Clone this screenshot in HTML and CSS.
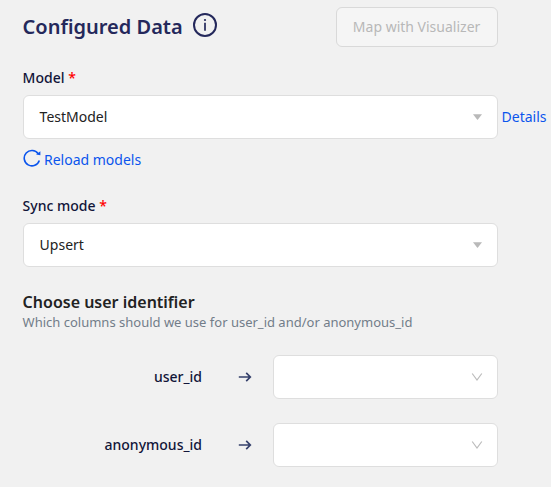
FILE: index.html
```html
<!DOCTYPE html>
<html lang="en">
<head>
<meta charset="utf-8">
<title>Configured Data</title>
<link rel="stylesheet" href="styles.css">
</head>
<body>
<main class="form">
  <header class="header">
    <h1 class="title">Configured Data</h1>
    <svg class="info" viewBox="0 0 24 24" fill="none" stroke="currentColor"><circle cx="12" cy="12" r="11" stroke-width="2"/><path d="M12 9.7v8" stroke-width="1.7"/><circle cx="12" cy="7" r="1.1" fill="currentColor" stroke="none"/></svg>
    <button class="button" disabled>Map with Visualizer</button>
  </header>

  <label class="label">Model <span class="required">*</span></label>
  <div class="field">
    <div class="select">TestModel<svg class="caret" viewBox="0 0 9 6"><path d="M0 .2h9L4.5 6z" fill="currentColor"/></svg></div>
    <a class="link">Details</a>
  </div>
  <a class="link reload">
    <svg class="reload-icon" viewBox="0 0 18 18" fill="none" stroke="currentColor" stroke-width="1.6"><path d="M16.3 11.4A7.7 7.7 0 1 1 15.2 4.7"/><path d="M17.4 2.2v4.1l-4.3-.7z" fill="currentColor" stroke="none"/></svg>
    <span>Reload models</span>
  </a>

  <label class="label label-sync">Sync mode <span class="required">*</span></label>
  <div class="field">
    <div class="select">Upsert<svg class="caret" viewBox="0 0 9 6"><path d="M0 .2h9L4.5 6z" fill="currentColor"/></svg></div>
  </div>

  <h2 class="subtitle">Choose user identifier</h2>
  <p class="hint">Which columns should we use for user_id and/or anonymous_id</p>

  <div class="mapping">
    <span class="key">user_id</span>
    <svg class="arrow" viewBox="0 0 14 10" fill="none" stroke="currentColor" stroke-width="1.7"><path d="M.8 5h11.6M8.2 .9 12.3 5 8.2 9.1"/></svg>
    <div class="select"><svg class="chevron" viewBox="0 0 12 8" fill="none" stroke="currentColor" stroke-width="1.2"><path d="M1.2 .5 6 7 10.8 .5"/></svg></div>
  </div>
  <div class="mapping">
    <span class="key">anonymous_id</span>
    <svg class="arrow" viewBox="0 0 14 10" fill="none" stroke="currentColor" stroke-width="1.7"><path d="M.8 5h11.6M8.2 .9 12.3 5 8.2 9.1"/></svg>
    <div class="select"><svg class="chevron" viewBox="0 0 12 8" fill="none" stroke="currentColor" stroke-width="1.2"><path d="M1.2 .5 6 7 10.8 .5"/></svg></div>
  </div>
</main>
</body>
</html>
```
FILE: styles.css
```css
* { box-sizing: border-box; }

body {
  margin: 0;
  background: #f1f1f1;
  color: #222;
  font: 14px/20px "Noto Sans", sans-serif;
  overflow: hidden;
}

.form {
  width: 497.6px;
  height: 487px;
  padding: 7px 0 0 22.6px;
}

.header {
  display: flex;
  align-items: center;
  height: 40px;
}

.title {
  margin: 0;
  color: #24285b;
  font-size: 20px;
  font-weight: 600;
  line-height: 28px;
  white-space: nowrap;
}

.info {
  width: 24px;
  height: 24px;
  margin: 0 0 4px 10px;
  color: #24285b;
}

.button {
  width: 162px;
  height: 40px;
  margin-left: auto;
  padding: 0;
  border: 1px solid #d9d9d9;
  border-radius: 6px;
  background: #f5f5f5;
  color: #b8b8b8;
  font: inherit;
}

.label {
  display: block;
  height: 20px;
  margin: 21px 0 7px;
  color: #111539;
  font-weight: 500;
}

.required { color: #f00; }

.field {
  display: flex;
  align-items: center;
}

.select {
  display: flex;
  flex: none;
  align-items: center;
  width: 475px;
  height: 44px;
  padding: 0 16px;
  border: 1px solid #dedede;
  border-radius: 6px;
  background: #fff;
}

.link {
  color: #0b55ed;
  white-space: nowrap;
}

.field .link { margin-left: 4px; }

.caret {
  width: 9px;
  height: 6px;
  margin-left: auto;
  margin-right: -1px;
  color: #b9b9b9;
}

.reload {
  display: flex;
  align-items: center;
  height: 20px;
  margin-top: 11px;
}

.reload-icon {
  width: 18px;
  height: 18px;
  margin: 0 3px 4px .4px;
}

.label-sync { margin-top: 26px; }

.subtitle {
  margin: 24px 0 0;
  font-size: 16px;
  font-weight: 600;
  line-height: 22px;
}

.hint {
  margin: 0 0 24px;
  color: #727d89;
  font-size: 13px;
  line-height: 18px;
}

.mapping {
  display: flex;
  align-items: center;
  margin-bottom: 24px;
}

.key {
  width: 179.4px;
  color: #111539;
  font-weight: 500;
  text-align: right;
}

.arrow {
  width: 14px;
  height: 10px;
  margin: 0 20.6px 0 36px;
  color: #35406b;
}

.mapping .select {
  width: 225px;
  padding-right: 14px;
}

.chevron {
  width: 12px;
  height: 8px;
  margin-left: auto;
  color: #bcbcbc;
}
```
